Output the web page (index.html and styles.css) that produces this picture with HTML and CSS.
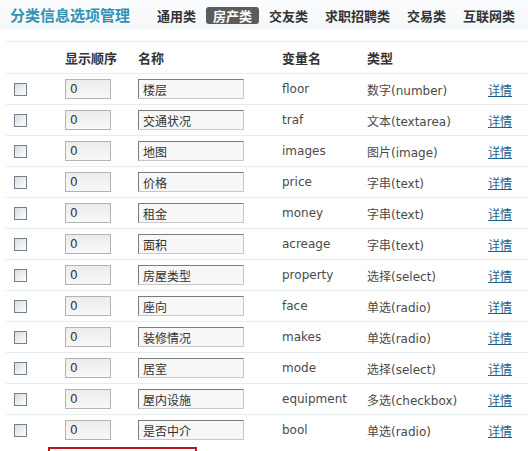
FILE: index.html
```html
<!DOCTYPE html>
<html>

<head>
    <title>分类信息选项管理</title>
    <link rel="stylesheet" href="styles.css">
</head>

<body>
    <div class="top">
        <h2 class="title">分类信息选项管理</h2>
        <ul class="tabs">
            <li>通用类</li>
            <li class="on">房产类</li>
            <li>交友类</li>
            <li>求职招聘类</li>
            <li>交易类</li>
            <li>互联网类</li>
        </ul>
    </div>

    <table class="options">
        <colgroup>
            <col class="c-check">
            <col class="c-order">
            <col class="c-name">
            <col class="c-var">
            <col class="c-type">
            <col class="c-op">
        </colgroup>
        <thead>
            <tr>
                <th></th>
                <th>显示顺序</th>
                <th>名称</th>
                <th>变量名</th>
                <th>类型</th>
                <th></th>
            </tr>
        </thead>
        <tbody>
            <tr>
                <td><input type="checkbox" class="chk"></td>
                <td><input type="text" class="order" value="0"></td>
                <td><input type="text" class="name" value="楼层"></td>
                <td class="var">floor</td>
                <td>数字(number)</td>
                <td><a href="#">详情</a></td>
            </tr>
            <tr>
                <td><input type="checkbox" class="chk"></td>
                <td><input type="text" class="order" value="0"></td>
                <td><input type="text" class="name" value="交通状况"></td>
                <td class="var">traf</td>
                <td>文本(textarea)</td>
                <td><a href="#">详情</a></td>
            </tr>
            <tr>
                <td><input type="checkbox" class="chk"></td>
                <td><input type="text" class="order" value="0"></td>
                <td><input type="text" class="name" value="地图"></td>
                <td class="var">images</td>
                <td>图片(image)</td>
                <td><a href="#">详情</a></td>
            </tr>
            <tr>
                <td><input type="checkbox" class="chk"></td>
                <td><input type="text" class="order" value="0"></td>
                <td><input type="text" class="name" value="价格"></td>
                <td class="var">price</td>
                <td>字串(text)</td>
                <td><a href="#">详情</a></td>
            </tr>
            <tr>
                <td><input type="checkbox" class="chk"></td>
                <td><input type="text" class="order" value="0"></td>
                <td><input type="text" class="name" value="租金"></td>
                <td class="var">money</td>
                <td>字串(text)</td>
                <td><a href="#">详情</a></td>
            </tr>
            <tr>
                <td><input type="checkbox" class="chk"></td>
                <td><input type="text" class="order" value="0"></td>
                <td><input type="text" class="name" value="面积"></td>
                <td class="var">acreage</td>
                <td>字串(text)</td>
                <td><a href="#">详情</a></td>
            </tr>
            <tr>
                <td><input type="checkbox" class="chk"></td>
                <td><input type="text" class="order" value="0"></td>
                <td><input type="text" class="name" value="房屋类型"></td>
                <td class="var">property</td>
                <td>选择(select)</td>
                <td><a href="#">详情</a></td>
            </tr>
            <tr>
                <td><input type="checkbox" class="chk"></td>
                <td><input type="text" class="order" value="0"></td>
                <td><input type="text" class="name" value="座向"></td>
                <td class="var">face</td>
                <td>单选(radio)</td>
                <td><a href="#">详情</a></td>
            </tr>
            <tr>
                <td><input type="checkbox" class="chk"></td>
                <td><input type="text" class="order" value="0"></td>
                <td><input type="text" class="name" value="装修情况"></td>
                <td class="var">makes</td>
                <td>单选(radio)</td>
                <td><a href="#">详情</a></td>
            </tr>
            <tr>
                <td><input type="checkbox" class="chk"></td>
                <td><input type="text" class="order" value="0"></td>
                <td><input type="text" class="name" value="居室"></td>
                <td class="var">mode</td>
                <td>选择(select)</td>
                <td><a href="#">详情</a></td>
            </tr>
            <tr>
                <td><input type="checkbox" class="chk"></td>
                <td><input type="text" class="order" value="0"></td>
                <td><input type="text" class="name" value="屋内设施"></td>
                <td class="var">equipment</td>
                <td>多选(checkbox)</td>
                <td><a href="#">详情</a></td>
            </tr>
            <tr>
                <td><input type="checkbox" class="chk"></td>
                <td><input type="text" class="order" value="0"></td>
                <td><input type="text" class="name" value="是否中介"></td>
                <td class="var">bool</td>
                <td>单选(radio)</td>
                <td><a href="#">详情</a></td>
            </tr>
        </tbody>
    </table>

    <!-- 底部按钮，被截断 -->
    <div class="bottom">
        <div class="add-box"></div>
    </div>
</body>

</html>
```

FILE: styles.css
```css
body {
    margin: 0;
    background: #ffffff;
    font-family: "DejaVu Sans", "Noto Sans CJK SC", sans-serif;
    font-size: 12px;
    color: #444;
    overflow: hidden;
}

.top {
    display: flex;
    align-items: center;
    height: 30px;
    padding: 0 0 0 10px;
    margin-bottom: 11px;
    background: linear-gradient(#fbfcfd, #f4f7f9);
    white-space: nowrap;
}

.title {
    flex-shrink: 0;
    margin: 0;
    font-family: "Noto Sans CJK SC", sans-serif;
    font-size: 15px;
    font-weight: bold;
    color: #3592b5;
    line-height: 20px;
}

.tabs {
    display: flex;
    flex-shrink: 0;
    list-style: none;
    margin: 0 0 0 20px;
    padding: 0;
}

.tabs li {
    flex-shrink: 0;
    font-family: "Noto Sans CJK SC", sans-serif;
    font-size: 13px;
    font-weight: bold;
    color: #333;
    line-height: 17px;
    padding: 0 7px;
    margin-right: 3px;
    border-radius: 3px;
}

.tabs li.on {
    background: #5c5c5c;
    color: #ffffff;
}

.options {
    border-collapse: collapse;
    table-layout: fixed;
    width: 522px;
    margin-left: 6px;
}

.c-check { width: 59px; }
.c-order { width: 73px; }
.c-name { width: 144px; }
.c-var { width: 85px; }
.c-type { width: 121px; }
.c-op { width: 40px; }

.options tr {
    border-top: 1px solid #e6edf1;
}

.options th {
    height: 31px;
    padding: 0;
    text-align: left;
    font-family: "Noto Sans CJK SC", sans-serif;
    font-size: 13px;
    font-weight: bold;
    color: #333;
}

.options td {
    height: 30px;
    padding: 0;
    white-space: nowrap;
    color: #4a4a4a;
}

.var {
    color: #555;
}

.chk {
    appearance: none;
    display: block;
    width: 13px;
    height: 13px;
    margin: 0 0 0 8px;
    border: 1px solid #74808c;
    background: linear-gradient(135deg, #d9dce0, #ffffff);
    box-sizing: border-box;
}

input[type="text"] {
    display: block;
    box-sizing: border-box;
    height: 20px;
    padding: 0 0 0 4px;
    font-family: "DejaVu Sans", "Noto Sans CJK SC", sans-serif;
    font-size: 12px;
    color: #333;
    outline: none;
}

.order {
    width: 46px;
    border: 1px solid #b2b2b2;
    background: linear-gradient(#ececec, #f8f8f8);
}

.name {
    width: 106px;
    padding-left: 2px;
    border: 1px solid #c8c8c8;
    border-top-color: #7c7c7c;
    border-left-color: #7c7c7c;
    background: #f7f7f7;
    font-family: "Noto Sans CJK SC", sans-serif;
}

.options a {
    color: #1d6088;
    text-decoration: underline;
    font-family: "Noto Sans CJK SC", sans-serif;
}

.bottom {
    padding-left: 48px;
    margin-top: 2px;
}

.add-box {
    width: 145px;
    height: 20px;
    border: 2px solid #b01c1c;
}
```
